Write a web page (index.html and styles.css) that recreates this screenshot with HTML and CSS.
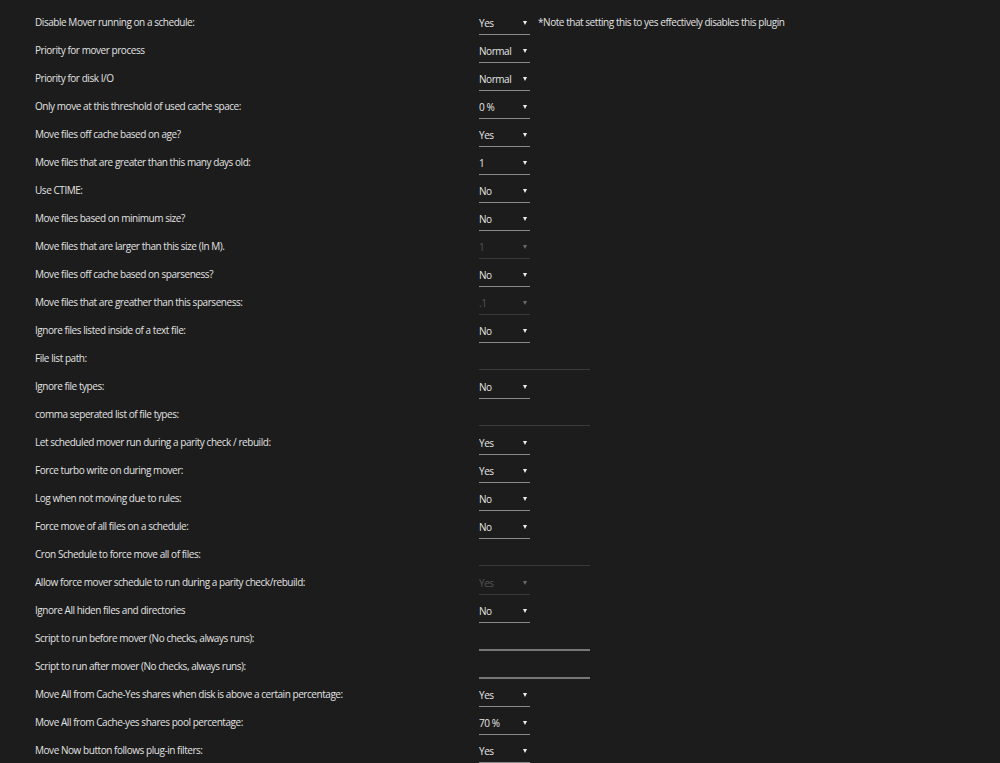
FILE: index.html
```html
<!DOCTYPE html>
<html>
<head>
  <title>Mover Tuning</title>
  <link rel="stylesheet" href="styles.css">
</head>
<body>
  <form class="settings">
    <div class="row">
      <label>Disable Mover running on a schedule:</label>
      <div class="field">
        <span class="pick"><select><option>Yes</option><option>No</option></select></span>
        <span class="note">*Note that setting this to yes effectively disables this plugin</span>
      </div>
    </div>
    <div class="row">
      <label>Priority for mover process</label>
      <div class="field"><span class="pick"><select><option>Normal</option></select></span></div>
    </div>
    <div class="row">
      <label>Priority for disk I/O</label>
      <div class="field"><span class="pick"><select><option>Normal</option></select></span></div>
    </div>
    <div class="row">
      <label>Only move at this threshold of used cache space:</label>
      <div class="field"><span class="pick"><select><option>0 %</option></select></span></div>
    </div>
    <div class="row">
      <label>Move files off cache based on age?</label>
      <div class="field"><span class="pick"><select><option>Yes</option></select></span></div>
    </div>
    <div class="row">
      <label>Move files that are greater than this many days old:</label>
      <div class="field"><span class="pick"><select><option>1</option></select></span></div>
    </div>
    <div class="row">
      <label>Use CTIME:</label>
      <div class="field"><span class="pick"><select><option>No</option></select></span></div>
    </div>
    <div class="row">
      <label>Move files based on minimum size?</label>
      <div class="field"><span class="pick"><select><option>No</option></select></span></div>
    </div>
    <div class="row">
      <label>Move files that are larger than this size (In M).</label>
      <div class="field"><span class="pick off"><select disabled><option>1</option></select></span></div>
    </div>
    <div class="row">
      <label>Move files off cache based on sparseness?</label>
      <div class="field"><span class="pick"><select><option>No</option></select></span></div>
    </div>
    <div class="row">
      <label>Move files that are greather than this sparseness:</label>
      <div class="field"><span class="pick off"><select disabled><option>.1</option></select></span></div>
    </div>
    <div class="row">
      <label>Ignore files listed inside of a text file:</label>
      <div class="field"><span class="pick"><select><option>No</option></select></span></div>
    </div>
    <div class="row">
      <label>File list path:</label>
      <div class="field"><input type="text" class="text off" disabled></div>
    </div>
    <div class="row">
      <label>Ignore file types:</label>
      <div class="field"><span class="pick"><select><option>No</option></select></span></div>
    </div>
    <div class="row">
      <label>comma seperated list of file types:</label>
      <div class="field"><input type="text" class="text off" disabled></div>
    </div>
    <div class="row">
      <label>Let scheduled mover run during a parity check / rebuild:</label>
      <div class="field"><span class="pick"><select><option>Yes</option></select></span></div>
    </div>
    <div class="row">
      <label>Force turbo write on during mover:</label>
      <div class="field"><span class="pick"><select><option>Yes</option></select></span></div>
    </div>
    <div class="row">
      <label>Log when not moving due to rules:</label>
      <div class="field"><span class="pick"><select><option>No</option></select></span></div>
    </div>
    <div class="row">
      <label>Force move of all files on a schedule:</label>
      <div class="field"><span class="pick"><select><option>No</option></select></span></div>
    </div>
    <div class="row">
      <label>Cron Schedule to force move all of files:</label>
      <div class="field"><input type="text" class="text off" disabled></div>
    </div>
    <div class="row">
      <label>Allow force mover schedule to run during a parity check/rebuild:</label>
      <div class="field"><span class="pick off"><select disabled><option>Yes</option></select></span></div>
    </div>
    <div class="row">
      <label>Ignore All hiden files and directories</label>
      <div class="field"><span class="pick"><select><option>No</option></select></span></div>
    </div>
    <div class="row">
      <label>Script to run before mover (No checks, always runs):</label>
      <div class="field"><input type="text" class="text"></div>
    </div>
    <div class="row">
      <label>Script to run after mover (No checks, always runs):</label>
      <div class="field"><input type="text" class="text"></div>
    </div>
    <div class="row">
      <label>Move All from Cache-Yes shares when disk is above a certain percentage:</label>
      <div class="field"><span class="pick"><select><option>Yes</option></select></span></div>
    </div>
    <div class="row">
      <label>Move All from Cache-yes shares pool percentage:</label>
      <div class="field"><span class="pick"><select><option>70 %</option></select></span></div>
    </div>
    <div class="row">
      <label>Move Now button follows plug-in filters:</label>
      <div class="field"><span class="pick"><select><option>Yes</option></select></span></div>
    </div>
  </form>
</body>
</html>
```

FILE: styles.css
```css
body {
  margin: 0;
  background: #1c1c1c;
  color: #e2e2e2;
  font-family: "Open Sans", sans-serif;
  font-size: 10px;
  letter-spacing: -0.45px;
  overflow: hidden;
}
.settings {
  padding: 8px 0 0 35px;
}
.row {
  display: grid;
  grid-template-columns: 444px 1fr;
  height: 28px;
  align-items: center;
}
.field {
  display: flex;
  align-items: center;
  gap: 8px;
  height: 28px;
}
.pick {
  position: relative;
  display: block;
  width: 51px;
  height: 21px;
  margin-top: 3px;
  border-bottom: 1px solid #8a8a8a;
}
.pick::after {
  content: "";
  position: absolute;
  right: 3px;
  top: 8px;
  border-left: 2px solid transparent;
  border-right: 2px solid transparent;
  border-top: 4px solid #f2f2f2;
}
.pick select {
  appearance: none;
  -webkit-appearance: none;
  background: transparent;
  border: none;
  outline: none;
  color: #e6e6e6;
  font: inherit;
  letter-spacing: inherit;
  width: 100%;
  height: 20px;
  padding: 0;
  margin: 0;
}
.pick.off {
  border-bottom-color: #3a3a3a;
}
.pick.off::after {
  border-top-color: #6a6a6a;
}
.pick.off select {
  color: #6e6e6e;
}
.note {
  color: #e2e2e2;
}
.text {
  width: 111px;
  height: 20px;
  margin: 3px 0 0 0;
  padding: 0;
  background: transparent;
  border: none;
  border-bottom: 2px solid #777;
  outline: none;
  color: #e6e6e6;
  font: inherit;
}
.text.off {
  border-bottom: 1px solid #3a3a3a;
}
```
